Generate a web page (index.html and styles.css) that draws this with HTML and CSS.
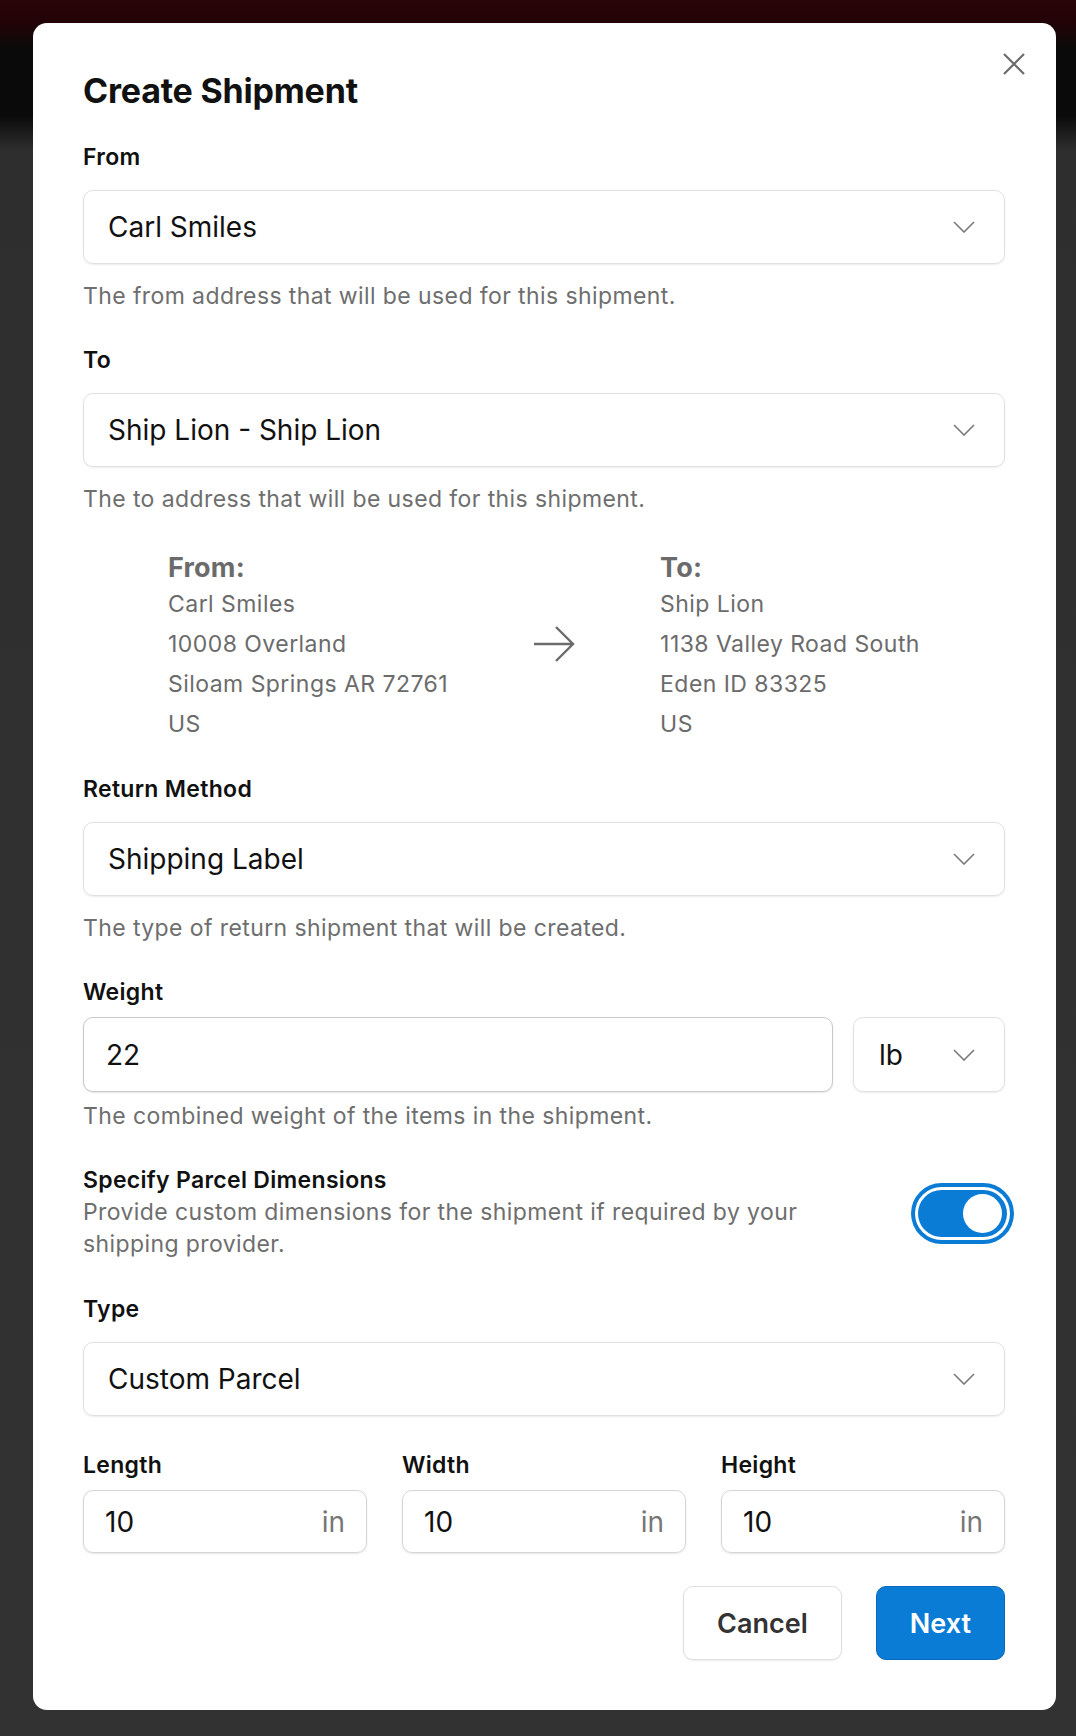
FILE: index.html
```html
<!DOCTYPE html>
<html lang="en">
<head>
    <meta charset="UTF-8">
    <meta name="viewport" content="width=device-width, initial-scale=1.0">
    <title>Create Shipment</title>
    <link rel="stylesheet" href="styles.css">
</head>
<body>
    <div class="modal">
        <button class="close" aria-label="Close">
            <svg width="22" height="22" viewBox="0 0 22 22"><path d="M1 1 L21 21 M21 1 L1 21" /></svg>
        </button>
        <h1 class="title">Create Shipment</h1>

        <div class="field">
            <label class="label">From</label>
            <div class="select">
                <span>Carl Smiles</span>
                <svg class="chevron" width="22" height="12" viewBox="0 0 22 12"><path d="M1 1 L11 11 L21 1" /></svg>
            </div>
            <p class="helper">The from address that will be used for this shipment.</p>
        </div>

        <div class="field">
            <label class="label">To</label>
            <div class="select">
                <span>Ship Lion - Ship Lion</span>
                <svg class="chevron" width="22" height="12" viewBox="0 0 22 12"><path d="M1 1 L11 11 L21 1" /></svg>
            </div>
            <p class="helper">The to address that will be used for this shipment.</p>
        </div>

        <div class="route">
            <div class="address">
                <div class="address-title">From:</div>
                <div>Carl Smiles</div>
                <div>10008 Overland</div>
                <div>Siloam Springs AR 72761</div>
                <div>US</div>
            </div>
            <svg class="arrow" width="42" height="36" viewBox="0 0 42 36"><path d="M1 18 H40 M23 1 L40 18 L23 35" /></svg>
            <div class="address">
                <div class="address-title">To:</div>
                <div>Ship Lion</div>
                <div>1138 Valley Road South</div>
                <div>Eden ID 83325</div>
                <div>US</div>
            </div>
        </div>

        <div class="field">
            <label class="label">Return Method</label>
            <div class="select">
                <span>Shipping Label</span>
                <svg class="chevron" width="22" height="12" viewBox="0 0 22 12"><path d="M1 1 L11 11 L21 1" /></svg>
            </div>
            <p class="helper">The type of return shipment that will be created.</p>
        </div>

        <div class="field">
            <label class="label label-tight">Weight</label>
            <div class="weight-row">
                <input class="input" type="text" value="22">
                <div class="select unit">
                    <span>lb</span>
                    <svg class="chevron" width="22" height="12" viewBox="0 0 22 12"><path d="M1 1 L11 11 L21 1" /></svg>
                </div>
            </div>
            <p class="helper helper-tight">The combined weight of the items in the shipment.</p>
        </div>

        <div class="field switch-row">
            <div class="switch-text">
                <div class="switch-title">Specify Parcel Dimensions</div>
                <p class="switch-desc">Provide custom dimensions for the shipment if required by your shipping provider.</p>
            </div>
            <div class="toggle"><span class="knob"></span></div>
        </div>

        <div class="field field-type">
            <label class="label">Type</label>
            <div class="select">
                <span>Custom Parcel</span>
                <svg class="chevron" width="22" height="12" viewBox="0 0 22 12"><path d="M1 1 L11 11 L21 1" /></svg>
            </div>
        </div>

        <div class="dims">
            <div>
                <label class="label label-tight">Length</label>
                <div class="dim"><input type="text" value="10"><span class="suffix">in</span></div>
            </div>
            <div>
                <label class="label label-tight">Width</label>
                <div class="dim"><input type="text" value="10"><span class="suffix">in</span></div>
            </div>
            <div>
                <label class="label label-tight">Height</label>
                <div class="dim"><input type="text" value="10"><span class="suffix">in</span></div>
            </div>
        </div>

        <div class="actions">
            <button class="btn btn-cancel">Cancel</button>
            <button class="btn btn-next">Next</button>
        </div>
    </div>
</body>
</html>
```

FILE: styles.css
```css
/* Page */
body {
    margin: 0;
    min-height: 1736px;
    font-family: Inter, "Noto Sans", sans-serif;
    color: #111;
    background: linear-gradient(to bottom, #2a0508 0, #220306 22px, #0a0a0a 50px, #0a0a0a 115px, #2e2e2e 150px, #323232 100%);
}

/* Modal */
.modal {
    position: relative;
    box-sizing: border-box;
    display: flex;
    flex-direction: column;
    width: 1023px;
    margin: 23px 0 0 33px;
    padding: 48px 51px 50px 50px;
    background: #fff;
    border-radius: 14px;
}

.title {
    margin: 0 0 32px;
    font-size: 34px;
    line-height: 40px;
    font-weight: 700;
    letter-spacing: -0.2px;
}

.close {
    position: absolute;
    top: 30px;
    right: 31px;
    padding: 0;
    border: none;
    background: none;
    width: 22px;
    height: 22px;
    cursor: pointer;
}

.close svg path {
    stroke: #6b6b6b;
    stroke-width: 2.2;
    fill: none;
}

/* Fields */
.field {
    margin-bottom: 36px;
}

.label {
    display: block;
    margin-bottom: 19px;
    font-size: 23px;
    line-height: 28px;
    font-weight: 600;
    letter-spacing: 0.3px;
}

.label-tight {
    margin-bottom: 11px;
}

.select {
    box-sizing: border-box;
    display: flex;
    align-items: center;
    justify-content: space-between;
    height: 74px;
    padding: 0 29px 0 24px;
    border: 1px solid #e1e1e1;
    border-radius: 10px;
    box-shadow: 0 1px 2px rgba(0, 0, 0, 0.08);
    font-size: 28px;
}

.chevron path {
    fill: none;
    stroke: #7a7a7a;
    stroke-width: 1.6;
}

.helper {
    margin: 18px 0 0;
    font-size: 23px;
    line-height: 28px;
    letter-spacing: 0.4px;
    color: #6e6e6e;
}

.helper-tight {
    margin-top: 10px;
}

/* From / To summary */
.route {
    display: flex;
    justify-content: space-evenly;
    align-items: center;
    margin: 3px 0 31px;
    color: #6b6b6b;
    font-size: 23px;
    line-height: 40px;
    letter-spacing: 0.45px;
}

.address-title {
    font-size: 27px;
    line-height: 32px;
    font-weight: 700;
    letter-spacing: 0.2px;
}

.arrow {
    margin-bottom: 8px;
}

.arrow path {
    fill: none;
    stroke: #6b6b6b;
    stroke-width: 2.4;
}

/* Weight */
.weight-row {
    display: flex;
    gap: 20px;
}

.input {
    box-sizing: border-box;
    flex: 1;
    min-width: 0;
    height: 75px;
    padding: 0 22px;
    border: 1px solid #c9c9c9;
    border-radius: 10px;
    box-shadow: 0 1px 2px rgba(0, 0, 0, 0.1);
    font-family: inherit;
    font-size: 28px;
    color: #111;
}

.unit {
    width: 152px;
    height: 75px;
    padding-left: 25px;
}

/* Toggle */
.switch-row {
    display: flex;
    align-items: center;
    justify-content: space-between;
    margin-bottom: 35px;
}

.switch-title {
    font-size: 23px;
    line-height: 28px;
    font-weight: 600;
    letter-spacing: 0.3px;
}

.switch-desc {
    max-width: 760px;
    margin: 2px 0 0;
    font-size: 23px;
    line-height: 32px;
    letter-spacing: 0.4px;
    color: #6e6e6e;
}

.toggle {
    position: relative;
    flex-shrink: 0;
    width: 89px;
    height: 47px;
    margin-right: -2px;
    border-radius: 24px;
    background: #0a7cd5;
    box-shadow: 0 0 0 3px #fff, 0 0 0 7px #0a7cd5;
}

.knob {
    position: absolute;
    top: 4px;
    right: 5px;
    width: 39px;
    height: 39px;
    border-radius: 50%;
    background: #fff;
}

/* Dimensions */
.field-type {
    margin-bottom: 35px;
}

.dims {
    display: grid;
    grid-template-columns: repeat(3, minmax(0, 1fr));
    gap: 35px;
}

.dim {
    box-sizing: border-box;
    display: flex;
    align-items: center;
    height: 63px;
    padding: 0 21px;
    border: 1px solid #d6d6d6;
    border-radius: 10px;
    box-shadow: 0 1px 2px rgba(0, 0, 0, 0.1);
}

.dim input {
    flex: 1;
    width: 0;
    min-width: 0;
    padding: 0;
    border: none;
    outline: none;
    font-family: inherit;
    font-size: 28px;
    color: #111;
}

.suffix {
    font-size: 28px;
    color: #777;
}

/* Buttons */
.actions {
    display: flex;
    justify-content: flex-end;
    gap: 34px;
    margin-top: 33px;
}

.btn {
    height: 74px;
    padding: 0 33px;
    border-radius: 10px;
    font-family: inherit;
    font-size: 27px;
    font-weight: 600;
    cursor: pointer;
}

.btn-cancel {
    background: #fff;
    color: #333;
    border: 1px solid #e0e0e0;
    box-shadow: 0 1px 2px rgba(0, 0, 0, 0.08);
}

.btn-next {
    background: #0a7cd5;
    color: #fff;
    border: 1px solid #0969b8;
}
```
